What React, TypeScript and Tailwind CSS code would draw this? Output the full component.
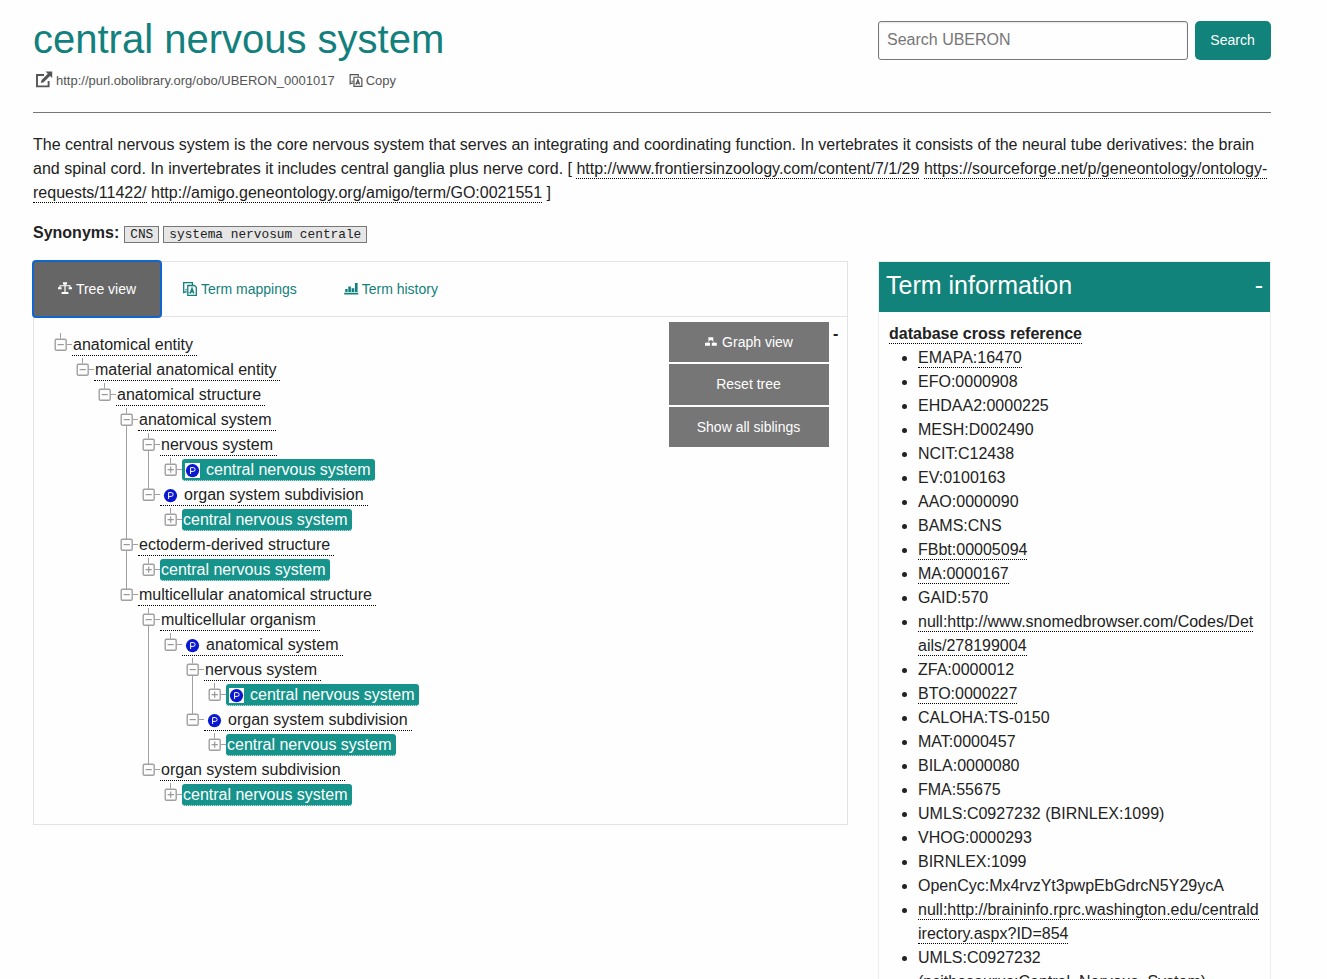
import { useState, type ReactNode } from "react";

type Node = { label: string; part?: boolean; hit?: boolean; children?: Node[] };

const cns: Node = { label: "central nervous system", hit: true };
const partCns: Node = { ...cns, part: true };

const tree: Node[] = [
  {
    label: "anatomical entity",
    children: [
      {
        label: "material anatomical entity",
        children: [
          {
            label: "anatomical structure",
            children: [
              {
                label: "anatomical system",
                children: [
                  { label: "nervous system", children: [partCns] },
                  { label: "organ system subdivision", part: true, children: [cns] },
                ],
              },
              { label: "ectoderm-derived structure", children: [cns] },
              {
                label: "multicellular anatomical structure",
                children: [
                  {
                    label: "multicellular organism",
                    children: [
                      {
                        label: "anatomical system",
                        part: true,
                        children: [
                          { label: "nervous system", children: [partCns] },
                          { label: "organ system subdivision", part: true, children: [cns] },
                        ],
                      },
                    ],
                  },
                  { label: "organ system subdivision", children: [cns] },
                ],
              },
            ],
          },
        ],
      },
    ],
  },
];

const xrefs: { text: string; link?: boolean }[] = [
  { text: "EMAPA:16470", link: true },
  { text: "EFO:0000908" },
  { text: "EHDAA2:0000225" },
  { text: "MESH:D002490" },
  { text: "NCIT:C12438" },
  { text: "EV:0100163" },
  { text: "AAO:0000090" },
  { text: "BAMS:CNS" },
  { text: "FBbt:00005094", link: true },
  { text: "MA:0000167", link: true },
  { text: "GAID:570" },
  { text: "null:http://www.snomedbrowser.com/Codes/Details/278199004", link: true },
  { text: "ZFA:0000012" },
  { text: "BTO:0000227", link: true },
  { text: "CALOHA:TS-0150" },
  { text: "MAT:0000457" },
  { text: "BILA:0000080" },
  { text: "FMA:55675" },
  { text: "UMLS:C0927232 (BIRNLEX:1099)" },
  { text: "VHOG:0000293" },
  { text: "BIRNLEX:1099" },
  { text: "OpenCyc:Mx4rvzYt3pwpEbGdrcN5Y29ycA" },
  { text: "null:http://braininfo.rprc.washington.edu/centraldirectory.aspx?ID=854", link: true },
  { text: "UMLS:C0927232 (ncithesaurus:Central_Nervous_System)" },
];

function ExternalIcon() {
  return (
    <svg className="-mt-px h-[17px] w-[18px] shrink-0" viewBox="0 0 18 17" fill="none">
      <path d="M9 4H2V15.4H13.6V10" stroke="currentColor" strokeWidth="1.9" />
      <path d="M10.6.4H17.2V7L15 4.9L8.7 11.2L5.8 12L6.6 9L12.8 2.7Z" fill="currentColor" />
    </svg>
  );
}

function MappingIcon({ className }: { className: string }) {
  return (
    <svg className={className} viewBox="0 0 14 14" fill="none">
      <path d="M3.8 9.9H2.4L.7 10.6V.7H9.4V3" stroke="currentColor" strokeWidth="1.3" />
      <path d="M4.8 3.5H11.4L13.3 5.2V13.3H4.8Z" stroke="currentColor" strokeWidth="1.3" />
      <path d="M7.2 11.4L9 6.4L10.8 11.4M7.8 9.9H10.2" stroke="currentColor" strokeWidth="1.4" />
      <path d="M2.2 7.8H4.4M5.5 10.5H6.5" stroke="currentColor" />
    </svg>
  );
}

function TreeIcon() {
  return (
    <svg className="h-[14px] w-[14px] shrink-0" viewBox="0 0 14 14" fill="currentColor">
      <path d="M5 .3H9V2.4H7.6V3.3H12.6V5.2H14.2V7.3H10.6V5.2H11.6V4.3H7.6V10H10.4V12.1H3.6V10H6.4V4.3H2.4V5.2H3.6V7.3H0V5.2H1.4V3.3H6.4V2.4H5Z" />
    </svg>
  );
}

function ChartIcon() {
  return (
    <svg className="h-[14px] w-[15px] shrink-0" viewBox="0 0 15 14" fill="currentColor">
      <path d="M.2 10.7H14.3V12.4H.2ZM1.2 7H3.6V10H1.2ZM4.3 4.6H6.9V10H4.3ZM7.6 6.2H10.2V10H7.6ZM10.9 1.1H13.6V10H10.9Z" />
    </svg>
  );
}

function GraphIcon() {
  return (
    <svg className="h-[10px] w-[12px] shrink-0" viewBox="0 0 12 10" fill="none">
      <path d="M4.4 3L2.6 6M7.4 3L9.2 6" stroke="currentColor" strokeWidth="1" strokeDasharray="1.2 .5" />
      <path d="M3.4.3H8.3V3.2H3.4ZM0 5.8H5V8.8H0ZM6.8 5.8H11.8V8.8H6.8Z" fill="currentColor" />
    </svg>
  );
}

function Toggle({ plus }: { plus: boolean }) {
  return (
    <svg className="h-[25px] w-[22px] shrink-0" viewBox="0 0 22 25" fill="none">
      <path d="M8.5 1V6.5M15 12.5H20" stroke="#a0a0a0" />
      <rect x="3.2" y="7.2" width="11" height="11" rx="1.3" fill="#fdfdfd" stroke="#a0a0a0" strokeWidth="1.4" />
      <path d={plus ? "M5.6 12.6H11.8M8.7 9.5V15.7" : "M5.6 12.6H11.8"} stroke="#999" strokeWidth="1.2" />
    </svg>
  );
}

function PartBadge({ boxed }: { boxed?: boolean }) {
  return (
    <svg className="ml-[2px] mr-[6px] mt-[6px] h-[15px] w-[15px] shrink-0" viewBox="0 0 15 15">
      {boxed && <rect width="15" height="15" fill="#fff" />}
      <circle cx="7.5" cy="7.6" r="6.6" fill="#0a18cf" />
      <path d="M5.6 11V4.6H8.2A1.8 1.8 0 0 1 8.2 8.4H5.6" fill="none" stroke="#fff" strokeWidth="1" />
    </svg>
  );
}

function Branch({ nodes }: { nodes: Node[] }) {
  return (
    <ul>
      {nodes.map((n, i) => (
        <li key={i} className="relative">
          {i < nodes.length - 1 && <span className="absolute top-[18px] bottom-[-7px] left-[8px] w-px bg-[#a0a0a0]" />}
          <div className="relative flex h-[25px]">
            <Toggle plus={!n.children} />
            <a
              className={
                n.hit
                  ? "-ml-[2px] mt-[2px] flex h-[22px] items-start rounded-[3px] border-b border-dotted border-[#d9efec] bg-[#16938a] pl-px pr-[4px] leading-[21px] text-white"
                  : "-ml-[2px] flex h-[24px] items-start border-b border-dotted border-black pl-px pr-[4px] leading-[25px] whitespace-nowrap"
              }
            >
              {n.part && (
                <span className={n.hit ? "-mt-[2px] flex" : "flex"}>
                  <PartBadge boxed={n.hit} />
                </span>
              )}
              {n.label}
            </a>
          </div>
          {n.children && (
            <div className="pl-[22px]">
              <Branch nodes={n.children} />
            </div>
          )}
        </li>
      ))}
    </ul>
  );
}

function Link({ children }: { children: ReactNode }) {
  return <a className="border-b border-dotted border-black pb-px">{children}</a>;
}

export default function App() {
  const [query, setQuery] = useState("");
  return (
    <div className="h-[979px] overflow-hidden bg-[#fefefe] pl-[33px] pr-[56px] font-['Liberation_Sans',Arial,sans-serif] text-base leading-6 text-[#222]">
      <header className="flex h-[113px] justify-between border-b border-[#777]">
        <div>
          <h1 className="mt-[11px] text-[40px] leading-[56px] text-[#12807c]">central nervous system</h1>
          <div className="mt-[4px] flex h-[18px] items-center pl-[2px] text-[13px] text-[#555]">
            <ExternalIcon />
            <span className="ml-[3px] mt-[2px]">http://purl.obolibrary.org/obo/UBERON_0001017</span>
            <MappingIcon className="ml-[14px] mr-[3px] mt-px h-[13px] w-[14px]" />
            <span className="mt-[2px]">Copy</span>
          </div>
        </div>
        <form className="mt-[21px] flex h-[39px] gap-[7px]">
          <input
            className="w-[310px] rounded-[3px] border border-[#777] bg-[#fefefe] px-2 pb-px text-base shadow-[inset_0_1px_2px_rgba(10,10,10,0.1)] placeholder:text-[#777]"
            placeholder="Search UBERON"
            value={query}
            onChange={(e) => setQuery(e.target.value)}
          />
          <button type="button" className="w-[76px] rounded-[5px] bg-[#12837b] pb-[2px] pr-px text-sm text-white">
            Search
          </button>
        </form>
      </header>

      <p className="mt-[20px]">
        The central nervous system is the core nervous system that serves an integrating and coordinating function. In vertebrates it consists of the neural tube derivatives: the brain and spinal cord. In invertebrates it includes central ganglia plus nerve cord. [ <Link>http://www.frontiersinzoology.com/content/7/1/29</Link>{" "}
        <Link>https://sourceforge.net/p/geneontology/ontology-requests/11422/</Link>{" "}
        <Link>http://amigo.geneontology.org/amigo/term/GO:0021551</Link> ]
      </p>

      <div className="mt-[16px] flex h-6 items-center">
        <b>Synonyms:</b>
        <div className="mt-[2px] flex gap-[4px] pl-[5px] font-['Liberation_Mono','Courier_New',monospace] text-[12.8px]">
          <span className="h-[17px] border border-[#777] bg-[#e6e6e6] px-[5px] leading-[16px]">CNS</span>
          <span className="h-[17px] border border-[#777] bg-[#e6e6e6] px-[5px] leading-[16px]">systema nervosum centrale</span>
        </div>
      </div>

      <div className="mt-[16px] flex items-start gap-[30px]">
        <main className="h-[564px] w-[815px] border border-[#e3e3e3]">
          <nav className="flex h-[55px] border-b border-[#e3e3e3] text-sm text-[#12807c]">
            <a className="-mt-[2px] -ml-[2px] flex h-[58px] w-[130px] items-center justify-center gap-[4px] rounded-[4px] border-2 border-[#1165cf] bg-[#666] text-white">
              <TreeIcon />
              Tree view
            </a>
            <a className="ml-[21px] flex items-center gap-[4px]">
              <MappingIcon className="h-[14px] w-[14px]" />
              Term mappings
            </a>
            <a className="ml-[47px] flex items-center gap-[3px]">
              <ChartIcon />
              Term history
            </a>
          </nav>
          <div className="flex justify-between pl-[18px]">
            <div className="pt-[15px]">
              <Branch nodes={tree} />
            </div>
            <div className="flex pt-[5px]">
              <div className="flex w-[160px] flex-col gap-[2px] text-sm text-[#fefefe]">
                <button className="flex h-[40px] items-center justify-center gap-[5px] bg-[#767676]">
                  <GraphIcon />
                  Graph view
                </button>
                <button className="h-[41px] bg-[#767676] pb-px pr-px">Reset tree</button>
                <button className="h-[40px] bg-[#767676] pr-px">Show all siblings</button>
              </div>
              <b className="w-[18px] pl-[4px]">-</b>
            </div>
          </div>
        </main>

        <aside className="w-[393px] border border-[#ececec]">
          <h2 className="flex h-[50px] justify-between bg-[#12837b] pl-[7px] pr-[7px] text-[25px] leading-[46px] text-white">
            <span>Term information</span>
            <span>-</span>
          </h2>
          <div className="px-[10px] pt-[10px]">
            <b className="border-b border-dotted border-black pb-px">database cross reference</b>
            <ul className="list-disc pl-[29px]">
              {xrefs.map((x) => (
                <li key={x.text} className="[overflow-wrap:anywhere]">
                  {x.link ? <Link>{x.text}</Link> : x.text}
                </li>
              ))}
            </ul>
          </div>
        </aside>
      </div>
    </div>
  );
}
